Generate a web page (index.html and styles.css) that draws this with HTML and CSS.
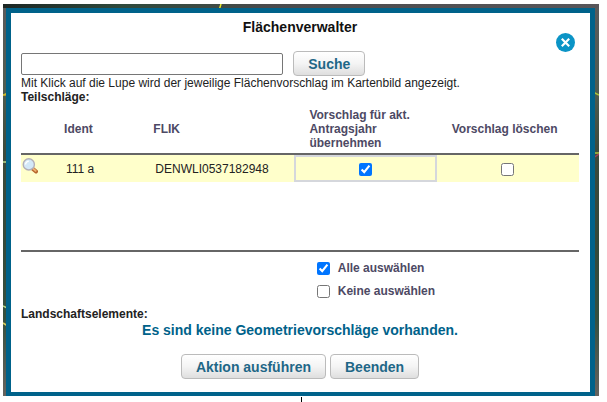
FILE: index.html
```html
<!DOCTYPE html>
<html lang="de">
<head>
  <meta charset="UTF-8">
  <meta name="viewport" content="width=device-width, initial-scale=1">
  <title>Flächenverwalter</title>
  <link rel="stylesheet" href="styles.css">
</head>
<body>

  <div class="map">
    <!-- Feldgrenzen im Luftbild -->
    <svg class="borders" viewBox="0 0 596 392" preserveAspectRatio="none" aria-hidden="true">
      <g fill="none" stroke-width="1.500">
        <path d="M218 0L212 20L0 91" stroke="#e6e62a"/>
        <path d="M0 91h8" stroke="#c9a92c"/>
        <path d="M0 158h8M0 302l8 4M0 386" stroke="#b9d98a"/>
        <path d="M0 319l8 5" stroke="#d8d060"/>
        <path d="M590 88l6 3M590 149h6" stroke="#a8c63c"/>
        <path d="M590 154l6 -4" stroke="#a0405a"/>
      </g>
    </svg>

    <div class="dialog" role="dialog" aria-labelledby="dialog-title">
      <h1 id="dialog-title">Flächenverwalter</h1>
      <button type="button" class="close" aria-label="Schließen">
        <svg viewBox="0 0 19 19" width="19" height="19">
          <circle cx="9.5" cy="9.5" r="9.5" fill="#0b94c6"/>
          <path d="M5.800 5.800l7.400 7.400M13.200 5.800l-7.400 7.400" stroke="#fff" stroke-width="2.200"/>
        </svg>
      </button>

      <form class="search">
        <input type="text" aria-label="Suchbegriff">
        <button type="button" class="btn">Suche</button>
      </form>

      <p class="hint">Mit Klick auf die Lupe wird der jeweilige Flächenvorschlag im Kartenbild angezeigt.</p>
      <h2>Teilschläge:</h2>

      <div class="list">
        <table>
          <colgroup>
            <col class="col-icon">
            <col class="col-ident">
            <col class="col-flik">
            <col class="col-check">
            <col class="col-check">
          </colgroup>
          <thead>
            <tr>
              <th></th>
              <th>Ident</th>
              <th>FLIK</th>
              <th class="option">Vorschlag für akt. Antragsjahr übernehmen</th>
              <th class="option">Vorschlag löschen</th>
            </tr>
          </thead>
          <tbody>
            <tr>
              <td class="icon">
                <button type="button" class="lupe" aria-label="Im Kartenbild anzeigen">
                  <svg viewBox="0 0 16 16" width="16" height="16">
                    <path d="M11 11l3 2.500" stroke="#b5652c" stroke-width="4" stroke-linecap="round"/>
                    <path d="M11 10.600l2.600 2.200" stroke="#f0b070" stroke-width="2" stroke-linecap="round"/>
                    <circle cx="6.800" cy="6.400" r="5.600" fill="#d3e8f8" stroke="#b3afb8" stroke-width="1.400"/>
                    <path d="M3.600 6.400a3.200 3.200 0 0 1 3.200-3.200" fill="none" stroke="#fff" stroke-width="1.400"/>
                  </svg>
                </button>
              </td>
              <td class="value">111 a</td>
              <td class="value">DENWLI0537182948</td>
              <td class="check focused"><input type="checkbox" aria-label="Vorschlag übernehmen" checked></td>
              <td class="check"><input type="checkbox" aria-label="Vorschlag löschen"></td>
            </tr>
          </tbody>
        </table>
      </div>

      <div class="select-all">
        <label><input type="checkbox" checked>Alle auswählen</label>
        <label><input type="checkbox">Keine auswählen</label>
      </div>

      <h2>Landschaftselemente:</h2>
      <p class="message">Es sind keine Geometrievorschläge vorhanden.</p>

      <div class="actions">
        <button type="button" class="btn">Aktion ausführen</button>
        <button type="button" class="btn">Beenden</button>
      </div>
    </div>
  </div>
  <div class="caret"></div>

</body>
</html>
```
FILE: styles.css
```css
* {
  box-sizing: border-box;
}

body {
  margin: 0;
  padding: 4px 8px 0 3px;
  background: #fff;
  color: #222;
  font: 12px/14px "Liberation Sans", Arial, sans-serif;
}

/* Luftbild hinter dem Dialog */
.map {
  position: relative;
  padding: 4px 4px 0 3px;
  background:
    linear-gradient(90deg, #1c2624, #2f4a3c 20%, #3a4a42 32%, #4a4a4c 45%, #58565a) top / 100% 4px no-repeat,
    linear-gradient(#5a5a5c, #4f5c50 22%, #3c4a3c 38%, #34493a 60%, #35503f 80%, #66635f);
}

.borders {
  position: absolute;
  inset: 0;
  width: 100%;
  height: 100%;
}

.dialog {
  position: relative;
  padding: 0 11px 13px 10px;
  background: #fff;
  border: 5px solid #00628a;
  border-bottom-width: 4px;
}

h1 {
  margin: 0;
  padding: 6px 0 16px;
  color: #111;
  font-size: 14px;
  line-height: 16px;
  text-align: center;
}

h2 {
  margin: 0;
  font-size: 12px;
  line-height: 14px;
}

p {
  margin: 0;
}

.close {
  position: absolute;
  top: 20px;
  right: 15px;
  padding: 0;
  border: 0;
  background: none;
  cursor: pointer;
}

.close svg,
.lupe svg {
  display: block;
}

/* Suche */
.search {
  display: flex;
  align-items: center;
  gap: 10px;
}

.search input {
  width: 47%;
  height: 22px;
  border: 1px solid #767676;
  border-radius: 2px;
}

.btn {
  height: 25px;
  padding: 0 14px;
  border: 1px solid #bbb;
  border-radius: 4px;
  background: linear-gradient(#fff, #f4f4f4 50%, #dedede);
  color: #1f6787;
  font: bold 14px/16px "Liberation Sans", Arial, sans-serif;
  cursor: pointer;
}

/* Tabelle */
.list {
  min-height: 148px;
  border-bottom: 2px solid #666;
}

table {
  width: 100%;
  border-collapse: collapse;
  table-layout: fixed;
}

.col-icon {
  width: 7%;
}

.col-ident {
  width: 16%;
}

.col-flik {
  width: 26%;
}

th {
  height: 50px;
  padding: 0 4px;
  border-bottom: 2px solid #666;
  color: #4d4964;
  text-align: left;
}

th.option {
  padding: 0 15px;
}

td {
  height: 28px;
  padding: 0;
  background: #ffffcb;
}

td.icon {
  padding-left: 1px;
  vertical-align: top;
}

td.value {
  padding-left: 6px;
}

.lupe {
  display: block;
  margin-top: 3px;
  padding: 0;
  border: 0;
  background: none;
  cursor: pointer;
}

td.check {
  text-align: center;
}

td.focused {
  box-shadow: inset 0 0 0 2px #d5d7dc;
}

input[type="checkbox"] {
  width: 13px;
  height: 13px;
  margin: 0;
  vertical-align: middle;
}

.select-all {
  display: grid;
  gap: 9px;
  margin-left: 53%;
  padding: 9px 0;
}

.select-all label {
  display: flex;
  align-items: center;
  gap: 8px;
  color: #4d4964;
  font-weight: bold;
}

.message {
  color: #00628a;
  font-size: 14px;
  font-weight: bold;
  line-height: 18px;
  text-align: center;
}

.actions {
  display: flex;
  justify-content: center;
  gap: 4px;
  margin-top: 15px;
}

.caret {
  width: 1px;
  height: 5px;
  margin: 1px auto 0;
  background: #000;
}
```
